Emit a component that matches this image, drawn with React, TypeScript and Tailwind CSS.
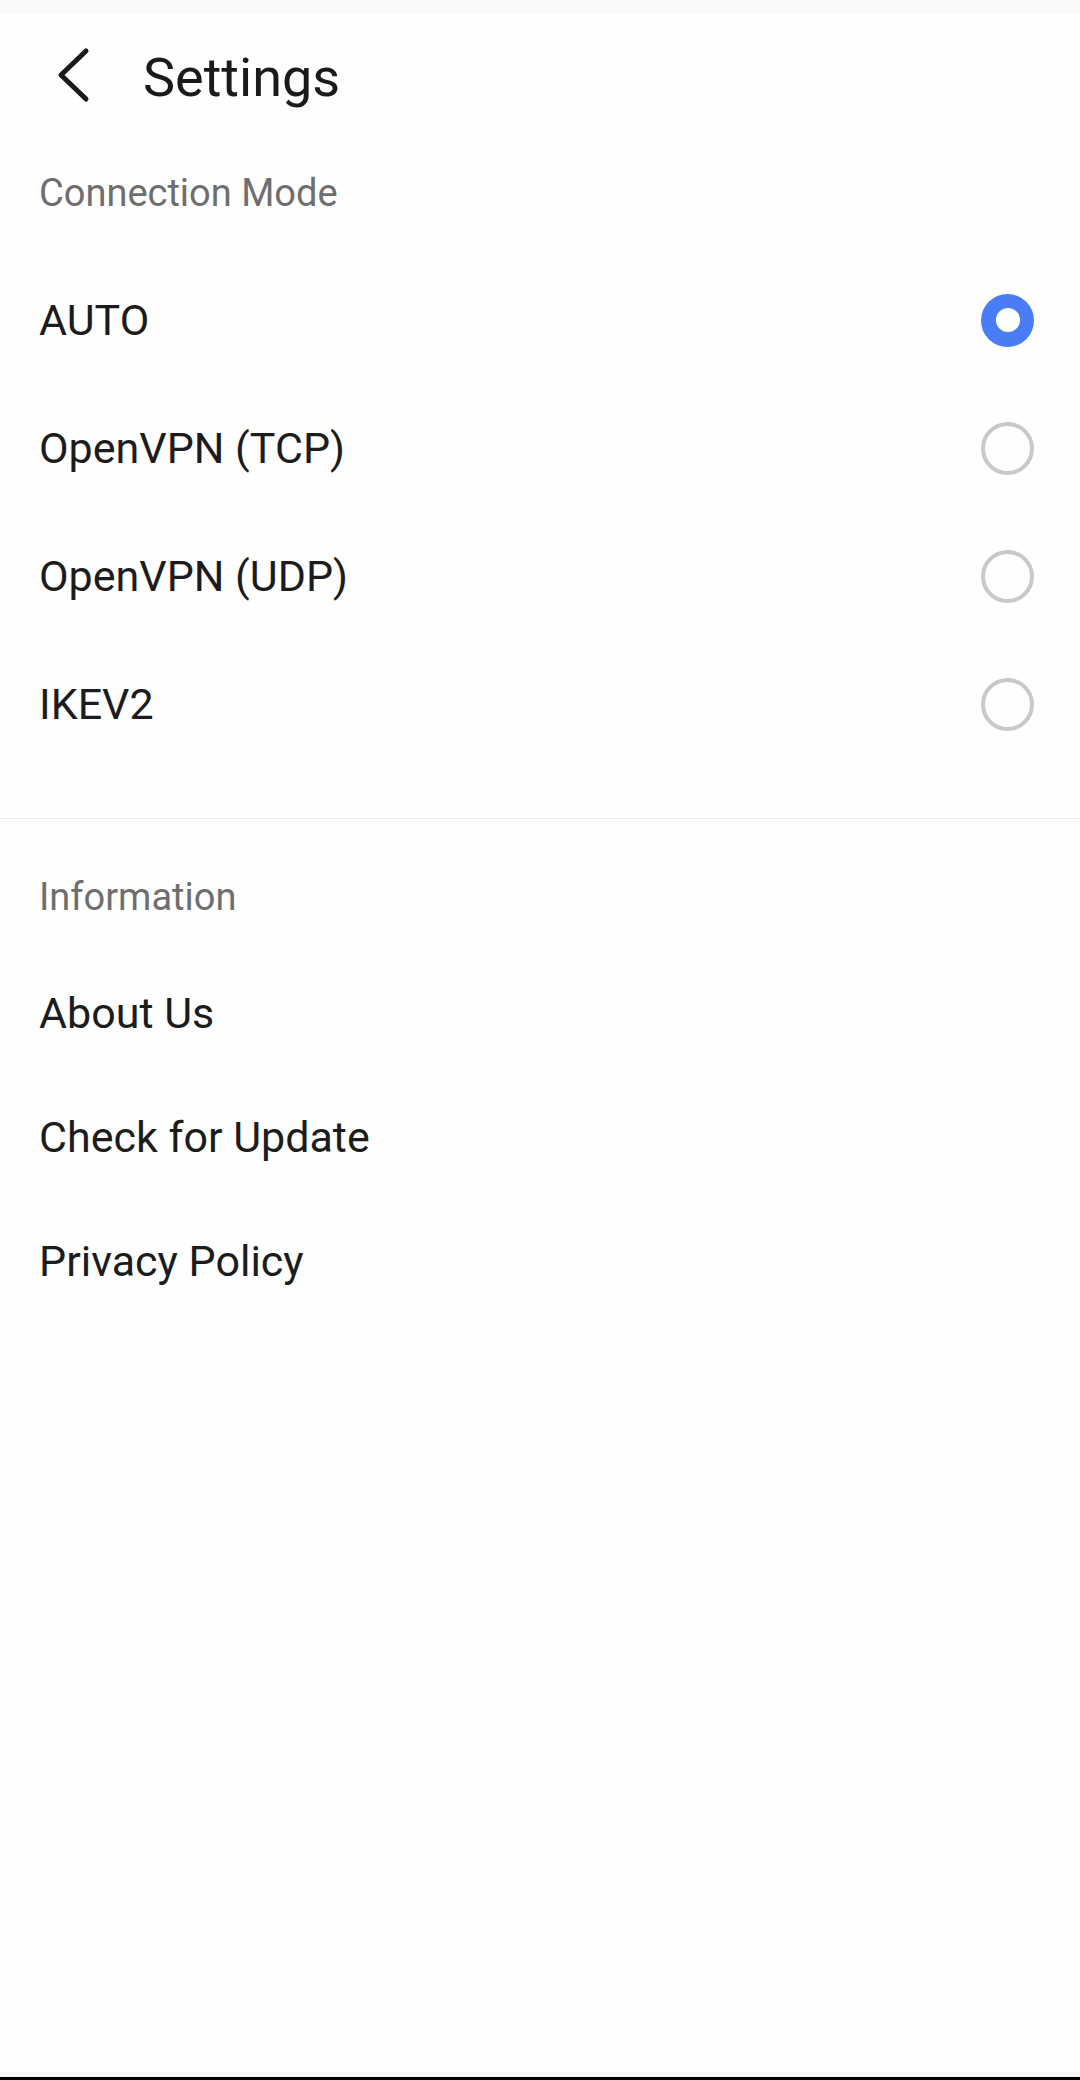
import React, { useState } from "react";

const MODES = ["AUTO", "OpenVPN (TCP)", "OpenVPN (UDP)", "IKEV2"];
const INFO_LINKS = ["About Us", "Check for Update", "Privacy Policy"];

function Radio({ checked }: { checked: boolean }) {
  if (checked) {
    return (
      <span className="flex h-[53px] w-[53px] items-center justify-center rounded-full bg-[#4a7cf6]">
        <span className="h-[24px] w-[24px] rounded-full bg-white" />
      </span>
    );
  }
  return <span className="block h-[53px] w-[53px] rounded-full border-[4px] border-[#c9c9c9]" />;
}

function SectionTitle({ children, className }: { children: React.ReactNode; className: string }) {
  return (
    <div className={`px-[39px] text-[38px] leading-[38px] text-[#6e6e6e] ${className}`}>
      {children}
    </div>
  );
}

export default function App() {
  const [mode, setMode] = useState("AUTO");

  return (
    <div className="flex min-h-[2080px] w-full flex-col bg-[#fefefe] font-[Roboto,'Liberation_Sans',sans-serif]">
      {/* status bar */}
      <div className="h-[14px] bg-[#fafafa]" />

      {/* toolbar */}
      <div className="flex h-[136px] items-center pl-[56px]">
        <svg className="mb-[14px] h-[56px] w-[36px]" viewBox="0 0 36 56" fill="none">
          <path
            d="M30 4 L5 28 L30 52"
            stroke="#1a1a1a"
            strokeWidth="5"
            strokeLinecap="round"
            strokeLinejoin="round"
          />
        </svg>
        <h1 className="mb-[8px] ml-[51px] text-[54px] leading-[62px] text-[#1a1a1a]">Settings</h1>
      </div>

      <div className="flex-1">
        <SectionTitle className="h-[106px] pt-[24px]">Connection Mode</SectionTitle>
        {MODES.map(m => (
          <button
            key={m}
            onClick={() => setMode(m)}
            className="flex h-[128px] w-full items-center justify-between pl-[39px] pr-[46px] text-left"
          >
            <span className="text-[43px] leading-[50px] text-[#1c1c1c]">{m}</span>
            <Radio checked={mode === m} />
          </button>
        ))}

        <div className="mt-[50px] h-[1px] bg-[#ebebeb]" />

        <SectionTitle className="h-[132px] pt-[59px]">Information</SectionTitle>
        {INFO_LINKS.map(item => (
          <div key={item} className="flex h-[124px] items-center px-[39px]">
            <span className="text-[43px] leading-[50px] text-[#1c1c1c]">{item}</span>
          </div>
        ))}
      </div>

      {/* nav bar edge */}
      <div className="h-[5px] bg-[#f6f6f6]" />
      <div className="h-[3px] bg-black" />
    </div>
  );
}
